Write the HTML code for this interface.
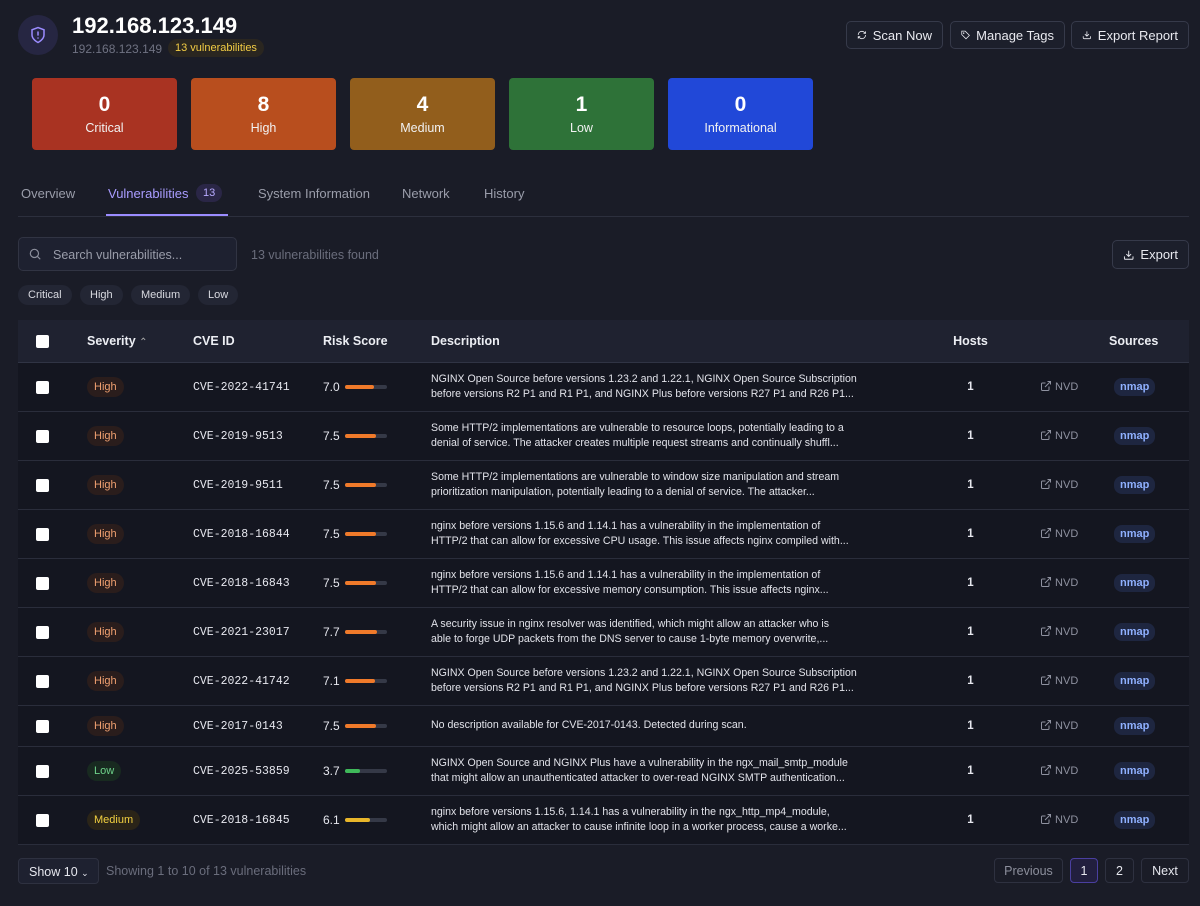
<!DOCTYPE html>
<html><head><meta charset="utf-8"><style>
*{box-sizing:border-box;margin:0;padding:0}
body{width:1200px;height:906px;background:#1a1c27;font-family:"Liberation Sans",sans-serif;color:#e6e7ee;position:relative;overflow:hidden}
.abs{position:absolute;white-space:nowrap}
.btn{position:absolute;top:21px;height:28px;border:1px solid #363a4a;border-radius:5px;background:#1c1f2b;color:#e8e9ef;font-size:13px;display:flex;align-items:center;padding:0 10px;gap:6px;white-space:nowrap}
.card{position:absolute;top:78px;width:145px;height:72px;border-radius:4px;text-align:center;color:#fff}
.card b{display:block;font-size:21px;margin-top:15px}
.card span{font-size:12.5px;display:block;margin-top:4px;color:#f2f2f2}
.tab{position:absolute;top:186px;font-size:13px;color:#9a9daa;white-space:nowrap}
.chip{position:absolute;top:285px;height:20px;border-radius:10px;background:#232634;font-size:11px;color:#d8d9e0;padding:4px 10px 0;white-space:nowrap}
table{position:absolute;left:18px;top:320px;width:1171px;border-collapse:collapse;font-size:12px;table-layout:fixed}
th{background:#1f2230;height:42px;text-align:left;font-size:12.5px;color:#eceef3;font-weight:bold;border-bottom:1px solid #303444;white-space:nowrap}
td{background:#141620;border-bottom:1px solid #2a2d3b;height:49px;vertical-align:middle;white-space:nowrap}
tr.s td{height:41px}
.cb{display:inline-block;width:13px;height:13px;background:#fff;border-radius:2px;margin-left:18px;vertical-align:middle}
.sev{display:inline-block;padding:4px 7px;border-radius:10px;font-size:11px}
.h{color:#f0a070;background:#2a1d1c}.l{color:#6ed28a;background:#182a20}.m{color:#f2d040;background:#2a2418}
.cve{font-family:"Liberation Mono",monospace;font-size:11.5px;color:#e6e7ee;padding-top:2px}
.bar{display:inline-block;width:42px;height:4px;background:#353947;border-radius:2px;vertical-align:middle;margin-left:5px;position:relative}
.bar i{position:absolute;left:0;top:0;height:4px;border-radius:2px;background:#f07a2a}
.desc{font-size:10.6px;line-height:15px;color:#e2e3ea;padding-right:10px}
.desc div{white-space:nowrap;overflow:hidden;text-overflow:ellipsis}
.hc{text-align:center;font-weight:bold;font-size:11.5px}
.nvd{color:#8f92a0;font-size:11px;text-align:left}
.nvd svg{vertical-align:-2px}
.src{text-align:left;padding-left:14px}
.nm{display:inline-block;background:#1e2640;color:#8fb0ff;font-size:11px;padding:3px 6px;border-radius:8px;font-weight:bold}
.pg{position:absolute;top:858px;height:25px;border:1px solid #2e3140;border-radius:4px;font-size:12.5px;display:flex;align-items:center;justify-content:center;background:#1a1c27}
</style></head><body>
<div class="abs" style="left:18px;top:15px;width:40px;height:40px;border-radius:50%;background:#262642"></div>
<svg class="abs" style="left:29px;top:26px" width="18" height="18" viewBox="0 0 24 24" fill="none" stroke="#9b8cff" stroke-width="2" stroke-linecap="round"><path d="M12 22s8-4 8-10V5l-8-3-8 3v7c0 6 8 10 8 10z"/><path d="M12 8v4M12 16h.01"/></svg>
<div class="abs" style="left:72px;top:13px;font-size:22px;font-weight:bold;color:#fff">192.168.123.149</div>
<div class="abs" style="left:72px;top:42px;font-size:12px;color:#6f7282">192.168.123.149</div>
<div class="abs" style="left:168px;top:39px;height:18px;padding:3px 7px;border-radius:9px;background:#2a2620;color:#f2cc44;font-size:11px">13 vulnerabilities</div>
<div class="btn" style="left:846px;width:97px"><svg width="14" height="14" viewBox="0 0 24 24" fill="none" stroke="#e8e9ef" stroke-width="2"><path d="M3 12a9 9 0 0 1 15-6.7L21 8M21 3v5h-5M21 12a9 9 0 0 1-15 6.7L3 16M3 21v-5h5"/></svg>Scan Now</div>
<div class="btn" style="left:950px;width:115px"><svg width="14" height="14" viewBox="0 0 24 24" fill="none" stroke="#e8e9ef" stroke-width="2"><path d="M2 2h9l11 11-9 9L2 11z"/><circle cx="7" cy="7" r="1"/></svg>Manage Tags</div>
<div class="btn" style="left:1071px;width:118px"><svg width="14" height="14" viewBox="0 0 24 24" fill="none" stroke="#e8e9ef" stroke-width="2"><path d="M21 15v4a2 2 0 0 1-2 2H5a2 2 0 0 1-2-2v-4M7 10l5 5 5-5M12 15V3"/></svg>Export Report</div>
<div class="card" style="left:32px;background:#a93322"><b>0</b><span>Critical</span></div>
<div class="card" style="left:191px;background:#b84e1e"><b>8</b><span>High</span></div>
<div class="card" style="left:350px;background:#925e1c"><b>4</b><span>Medium</span></div>
<div class="card" style="left:509px;background:#2e7238"><b>1</b><span>Low</span></div>
<div class="card" style="left:668px;background:#2148d8"><b>0</b><span>Informational</span></div>
<div class="tab" style="left:21px">Overview</div>
<div class="tab" style="left:108px;color:#a99cff">Vulnerabilities</div>
<div class="abs" style="left:196px;top:184px;background:#2a2646;color:#b7aaff;font-size:11px;padding:3px 7px;border-radius:9px">13</div>
<div class="tab" style="left:258px">System Information</div>
<div class="tab" style="left:402px">Network</div>
<div class="tab" style="left:484px">History</div>
<div class="abs" style="left:18px;top:216px;width:1171px;height:1px;background:#2c2f3d"></div>
<div class="abs" style="left:106px;top:214px;width:122px;height:2px;background:#9b8cff"></div>
<div class="abs" style="left:18px;top:237px;width:219px;height:34px;border:1px solid #313443;border-radius:5px;background:#1e2130"></div>
<svg class="abs" style="left:28px;top:247px" width="14" height="14" viewBox="0 0 24 24" fill="none" stroke="#8c8f9c" stroke-width="2"><circle cx="11" cy="11" r="7"/><path d="M21 21l-5-5"/></svg>
<div class="abs" style="left:53px;top:248px;font-size:12.5px;color:#9a9daa">Search vulnerabilities...</div>
<div class="abs" style="left:251px;top:248px;font-size:12.5px;color:#6a6d7c">13 vulnerabilities found</div>
<div class="btn" style="left:1112px;top:240px;width:77px;height:29px"><svg width="14" height="14" viewBox="0 0 24 24" fill="none" stroke="#e8e9ef" stroke-width="2"><path d="M21 15v4a2 2 0 0 1-2 2H5a2 2 0 0 1-2-2v-4M7 10l5 5 5-5M12 15V3"/></svg>Export</div>
<div class="chip" style="left:18px">Critical</div>
<div class="chip" style="left:80px">High</div>
<div class="chip" style="left:131px">Medium</div>
<div class="chip" style="left:198px">Low</div>
<table>
<colgroup><col style="width:69px"><col style="width:106px"><col style="width:130px"><col style="width:108px"><col style="width:470px"><col style="width:139px"><col style="width:60px"><col></colgroup>
<tr><th><span class="cb"></span></th><th>Severity <span style="font-weight:normal;color:#aaa;font-size:10px">&#8963;</span></th><th>CVE ID</th><th>Risk Score</th><th>Description</th><th style="text-align:center">Hosts</th><th></th><th style="padding-left:9px">Sources</th></tr>

<tr><td><span class="cb"></span></td><td><span class="sev h">High</span></td><td class="cve">CVE-2022-41741</td><td>7.0<span class="bar"><i style="width:29px"></i></span></td><td class="desc"><div>NGINX Open Source before versions 1.23.2 and 1.22.1, NGINX Open Source Subscription</div><div>before versions R2 P1 and R1 P1, and NGINX Plus before versions R27 P1 and R26 P1...</div></td><td class="hc">1</td><td class="nvd"><svg width="12" height="12" viewBox="0 0 24 24" fill="none" stroke="#8f92a0" stroke-width="2"><path d="M18 13v6a2 2 0 0 1-2 2H5a2 2 0 0 1-2-2V8a2 2 0 0 1 2-2h6M15 3h6v6M10 14L21 3"/></svg> NVD</td><td class="src"><span class="nm">nmap</span></td></tr>

<tr><td><span class="cb"></span></td><td><span class="sev h">High</span></td><td class="cve">CVE-2019-9513</td><td>7.5<span class="bar"><i style="width:31px"></i></span></td><td class="desc"><div>Some HTTP/2 implementations are vulnerable to resource loops, potentially leading to a</div><div>denial of service. The attacker creates multiple request streams and continually shuffl...</div></td><td class="hc">1</td><td class="nvd"><svg width="12" height="12" viewBox="0 0 24 24" fill="none" stroke="#8f92a0" stroke-width="2"><path d="M18 13v6a2 2 0 0 1-2 2H5a2 2 0 0 1-2-2V8a2 2 0 0 1 2-2h6M15 3h6v6M10 14L21 3"/></svg> NVD</td><td class="src"><span class="nm">nmap</span></td></tr>

<tr><td><span class="cb"></span></td><td><span class="sev h">High</span></td><td class="cve">CVE-2019-9511</td><td>7.5<span class="bar"><i style="width:31px"></i></span></td><td class="desc"><div>Some HTTP/2 implementations are vulnerable to window size manipulation and stream</div><div>prioritization manipulation, potentially leading to a denial of service. The attacker...</div></td><td class="hc">1</td><td class="nvd"><svg width="12" height="12" viewBox="0 0 24 24" fill="none" stroke="#8f92a0" stroke-width="2"><path d="M18 13v6a2 2 0 0 1-2 2H5a2 2 0 0 1-2-2V8a2 2 0 0 1 2-2h6M15 3h6v6M10 14L21 3"/></svg> NVD</td><td class="src"><span class="nm">nmap</span></td></tr>

<tr><td><span class="cb"></span></td><td><span class="sev h">High</span></td><td class="cve">CVE-2018-16844</td><td>7.5<span class="bar"><i style="width:31px"></i></span></td><td class="desc"><div>nginx before versions 1.15.6 and 1.14.1 has a vulnerability in the implementation of</div><div>HTTP/2 that can allow for excessive CPU usage. This issue affects nginx compiled with...</div></td><td class="hc">1</td><td class="nvd"><svg width="12" height="12" viewBox="0 0 24 24" fill="none" stroke="#8f92a0" stroke-width="2"><path d="M18 13v6a2 2 0 0 1-2 2H5a2 2 0 0 1-2-2V8a2 2 0 0 1 2-2h6M15 3h6v6M10 14L21 3"/></svg> NVD</td><td class="src"><span class="nm">nmap</span></td></tr>

<tr><td><span class="cb"></span></td><td><span class="sev h">High</span></td><td class="cve">CVE-2018-16843</td><td>7.5<span class="bar"><i style="width:31px"></i></span></td><td class="desc"><div>nginx before versions 1.15.6 and 1.14.1 has a vulnerability in the implementation of</div><div>HTTP/2 that can allow for excessive memory consumption. This issue affects nginx...</div></td><td class="hc">1</td><td class="nvd"><svg width="12" height="12" viewBox="0 0 24 24" fill="none" stroke="#8f92a0" stroke-width="2"><path d="M18 13v6a2 2 0 0 1-2 2H5a2 2 0 0 1-2-2V8a2 2 0 0 1 2-2h6M15 3h6v6M10 14L21 3"/></svg> NVD</td><td class="src"><span class="nm">nmap</span></td></tr>

<tr><td><span class="cb"></span></td><td><span class="sev h">High</span></td><td class="cve">CVE-2021-23017</td><td>7.7<span class="bar"><i style="width:32px"></i></span></td><td class="desc"><div>A security issue in nginx resolver was identified, which might allow an attacker who is</div><div>able to forge UDP packets from the DNS server to cause 1-byte memory overwrite,...</div></td><td class="hc">1</td><td class="nvd"><svg width="12" height="12" viewBox="0 0 24 24" fill="none" stroke="#8f92a0" stroke-width="2"><path d="M18 13v6a2 2 0 0 1-2 2H5a2 2 0 0 1-2-2V8a2 2 0 0 1 2-2h6M15 3h6v6M10 14L21 3"/></svg> NVD</td><td class="src"><span class="nm">nmap</span></td></tr>

<tr><td><span class="cb"></span></td><td><span class="sev h">High</span></td><td class="cve">CVE-2022-41742</td><td>7.1<span class="bar"><i style="width:30px"></i></span></td><td class="desc"><div>NGINX Open Source before versions 1.23.2 and 1.22.1, NGINX Open Source Subscription</div><div>before versions R2 P1 and R1 P1, and NGINX Plus before versions R27 P1 and R26 P1...</div></td><td class="hc">1</td><td class="nvd"><svg width="12" height="12" viewBox="0 0 24 24" fill="none" stroke="#8f92a0" stroke-width="2"><path d="M18 13v6a2 2 0 0 1-2 2H5a2 2 0 0 1-2-2V8a2 2 0 0 1 2-2h6M15 3h6v6M10 14L21 3"/></svg> NVD</td><td class="src"><span class="nm">nmap</span></td></tr>

<tr class="s"><td><span class="cb"></span></td><td><span class="sev h">High</span></td><td class="cve">CVE-2017-0143</td><td>7.5<span class="bar"><i style="width:31px"></i></span></td><td class="desc"><div>No description available for CVE-2017-0143. Detected during scan.</div></td><td class="hc">1</td><td class="nvd"><svg width="12" height="12" viewBox="0 0 24 24" fill="none" stroke="#8f92a0" stroke-width="2"><path d="M18 13v6a2 2 0 0 1-2 2H5a2 2 0 0 1-2-2V8a2 2 0 0 1 2-2h6M15 3h6v6M10 14L21 3"/></svg> NVD</td><td class="src"><span class="nm">nmap</span></td></tr>

<tr><td><span class="cb"></span></td><td><span class="sev l">Low</span></td><td class="cve">CVE-2025-53859</td><td>3.7<span class="bar"><i style="width:15px;background:#3fb95a"></i></span></td><td class="desc"><div>NGINX Open Source and NGINX Plus have a vulnerability in the ngx_mail_smtp_module</div><div>that might allow an unauthenticated attacker to over-read NGINX SMTP authentication...</div></td><td class="hc">1</td><td class="nvd"><svg width="12" height="12" viewBox="0 0 24 24" fill="none" stroke="#8f92a0" stroke-width="2"><path d="M18 13v6a2 2 0 0 1-2 2H5a2 2 0 0 1-2-2V8a2 2 0 0 1 2-2h6M15 3h6v6M10 14L21 3"/></svg> NVD</td><td class="src"><span class="nm">nmap</span></td></tr>

<tr><td><span class="cb"></span></td><td><span class="sev m">Medium</span></td><td class="cve">CVE-2018-16845</td><td>6.1<span class="bar"><i style="width:25px;background:#e8b62a"></i></span></td><td class="desc"><div>nginx before versions 1.15.6, 1.14.1 has a vulnerability in the ngx_http_mp4_module,</div><div>which might allow an attacker to cause infinite loop in a worker process, cause a worke...</div></td><td class="hc">1</td><td class="nvd"><svg width="12" height="12" viewBox="0 0 24 24" fill="none" stroke="#8f92a0" stroke-width="2"><path d="M18 13v6a2 2 0 0 1-2 2H5a2 2 0 0 1-2-2V8a2 2 0 0 1 2-2h6M15 3h6v6M10 14L21 3"/></svg> NVD</td><td class="src"><span class="nm">nmap</span></td></tr>
</table>
<div class="abs" style="left:18px;top:858px;width:81px;height:26px;border:1px solid #2e3140;border-radius:4px;background:#1e2130;font-size:12.5px;padding:6px 10px">Show 10 <span style="font-size:9px">&#8964;</span></div>
<div class="abs" style="left:106px;top:864px;font-size:12.5px;color:#6a6d7c">Showing 1 to 10 of 13 vulnerabilities</div>
<div class="pg" style="left:994px;width:69px;color:#8c8f9c">Previous</div>
<div class="pg" style="left:1070px;width:28px;background:#221f3e;border-color:#4a3fa0">1</div>
<div class="pg" style="left:1105px;width:29px">2</div>
<div class="pg" style="left:1141px;width:48px">Next</div>
</body></html>
